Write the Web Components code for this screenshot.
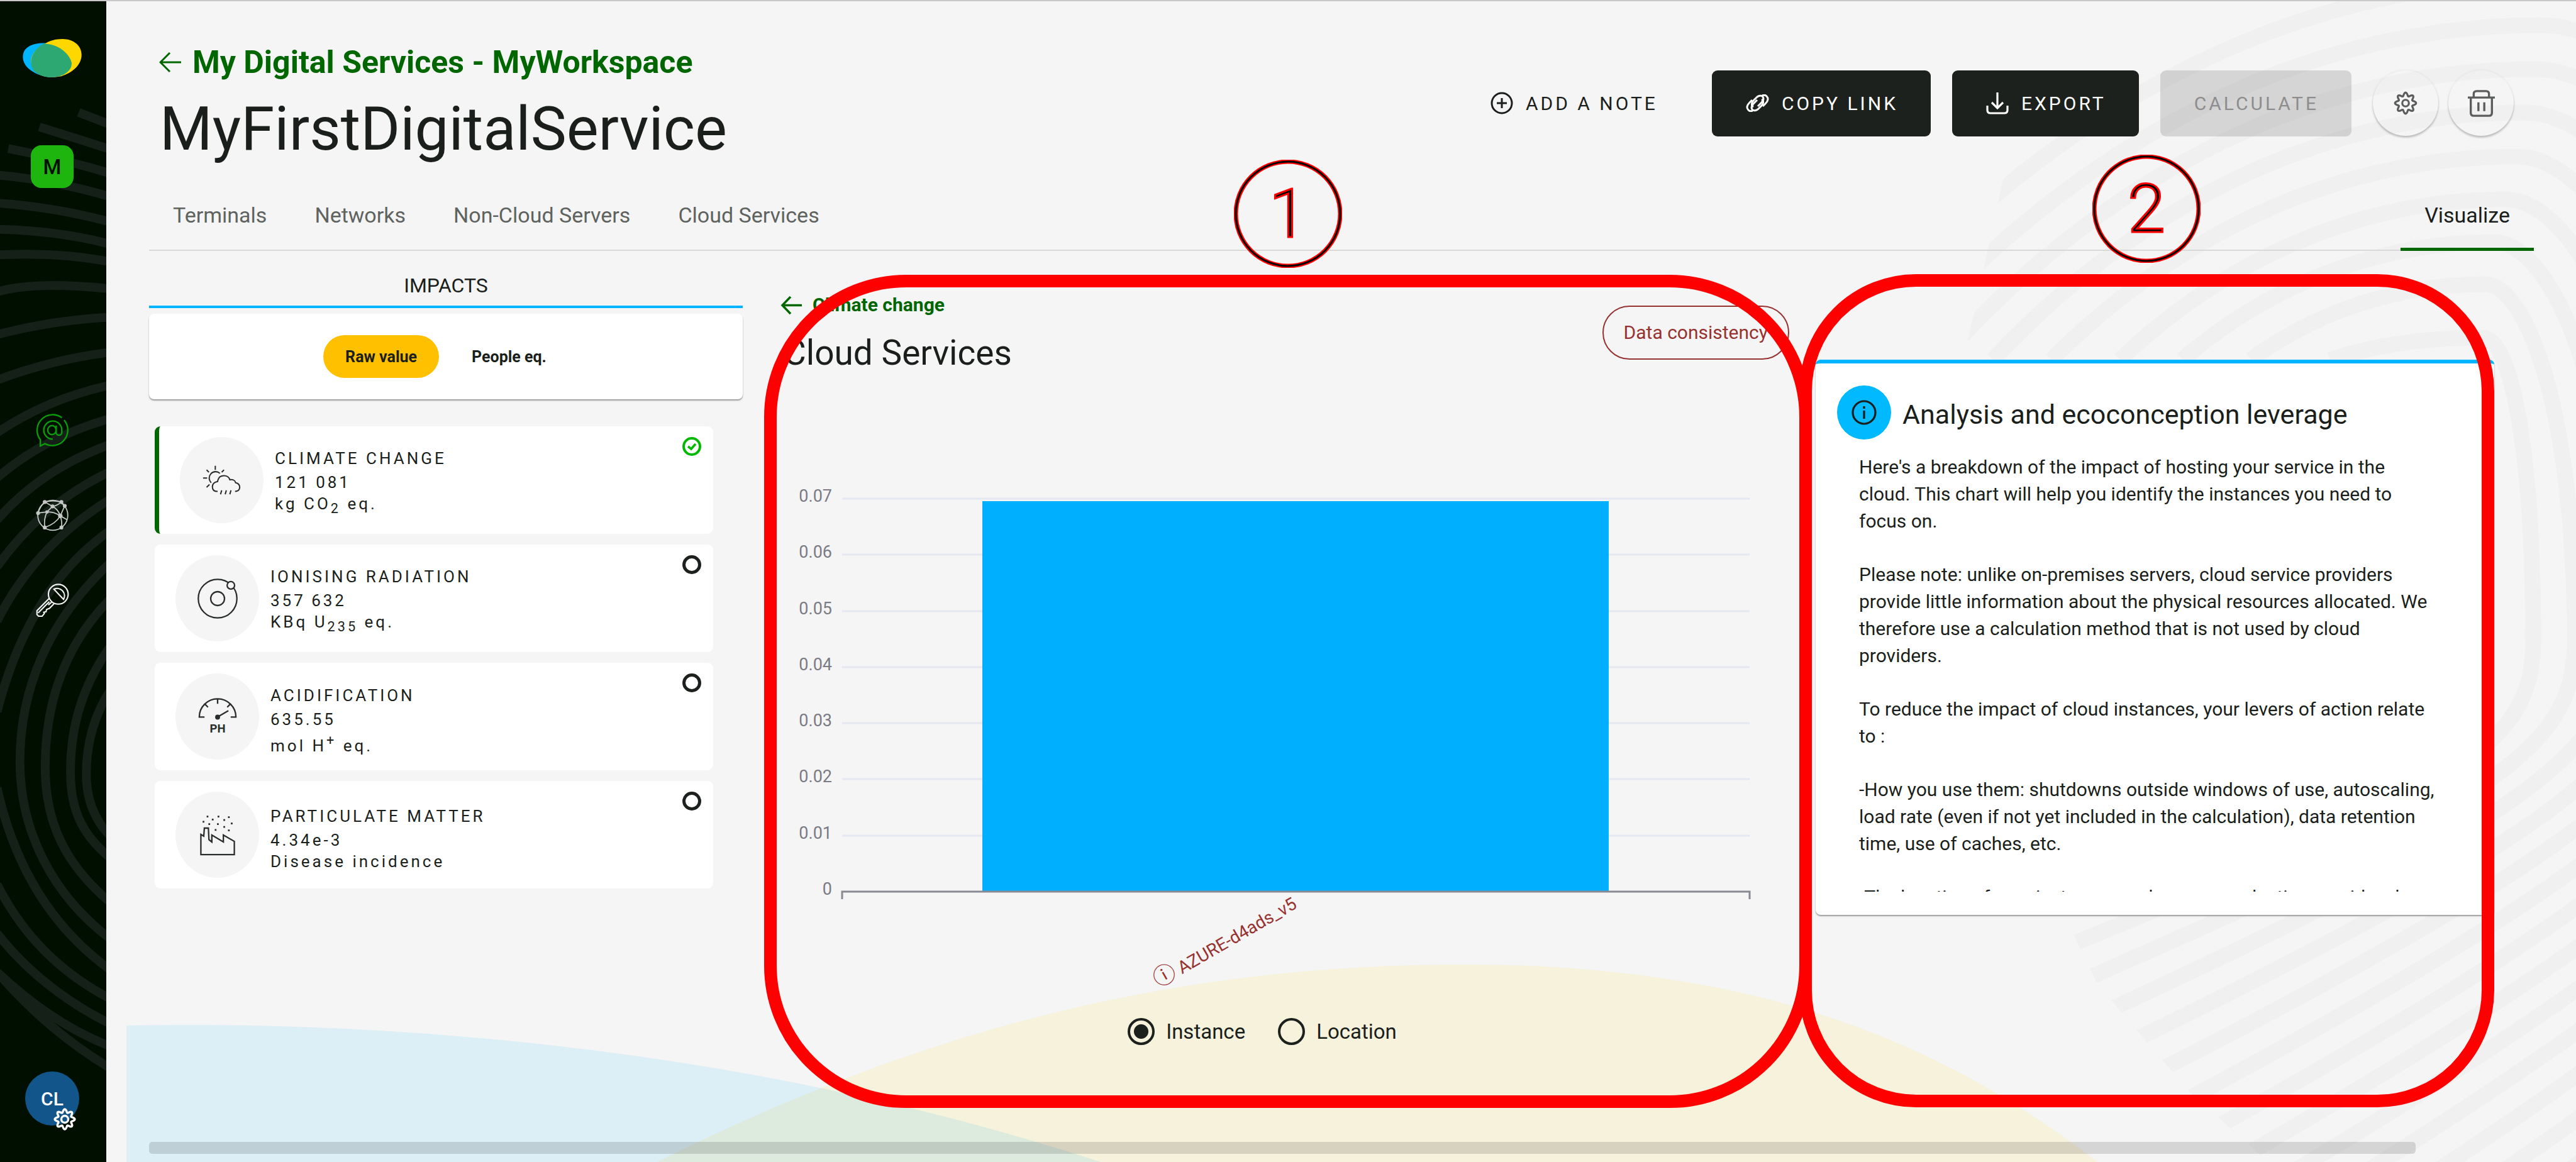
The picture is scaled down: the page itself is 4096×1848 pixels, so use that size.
<!DOCTYPE html>
<html lang="en">
<head>
<meta charset="utf-8">
<title>MyFirstDigitalService</title>
<style>
  html, body { margin: 0; background: #f5f5f5; }
  body { font-family: Roboto, "Liberation Sans", sans-serif; color: #1b1f1c; }
</style>
</head>
<body>
<app-shell>
  <side-bar slot="side"></side-bar>
  <page-header></page-header>
  <dashboard-grid>
    <impacts-panel slot="left"></impacts-panel>
    <chart-panel slot="middle"></chart-panel>
    <info-panel slot="right" heading="Analysis and ecoconception leverage">
      <p>Here's a breakdown of the impact of hosting your service in the cloud. This chart will help you identify the instances you need to focus on.</p>
      <p>Please note: unlike on-premises servers, cloud service providers provide little information about the physical resources allocated. We therefore use a calculation method that is not used by cloud providers.</p>
      <p>To reduce the impact of cloud instances, your levers of action relate to :</p>
      <p>-How you use them: shutdowns outside windows of use, autoscaling, load rate (even if not yet included in the calculation), data retention time, use of caches, etc.</p>
      <p>-The location of your instances and energy production provide a low</p>
    </info-panel>
  </dashboard-grid>
</app-shell>
<zone-frame style="left:1215px;top:437px;width:1666px;height:1325px;--r:226px"></zone-frame>
<zone-frame style="left:2861px;top:436px;width:1105px;height:1325px;--r:186px"></zone-frame>
<zone-number style="left:1962px;top:254px">1</zone-number>
<zone-number style="left:3327px;top:246px">2</zone-number>

<script>
const define = (name, html, extra) => customElements.define(name, class extends HTMLElement {
  constructor() {
    super();
    const t = document.createElement('template');
    t.innerHTML = '<style>*{box-sizing:border-box}svg{display:block;flex:none}a{color:inherit;text-decoration:none}button{font:inherit;color:inherit;border:0;background:none;padding:0;margin:0}</style>' + html;
    this.attachShadow({ mode: 'open' }).append(t.content.cloneNode(true));
  }
  connectedCallback() { if (extra) extra(this, this.shadowRoot); }
});

/* Eight-lobed cog outline around (18,18) */
const cog = (() => {
  let d = '';
  for (let i = 0; i < 128; i++) {
    const a = i / 128 * Math.PI * 2, r = 13.4 + 2.5 * Math.cos(8 * a);
    d += (i ? 'L' : 'M') + (18 + r * Math.sin(a)).toFixed(2) + ' ' + (18 - r * Math.cos(a)).toFixed(2);
  }
  return d + 'Z';
})();

define('app-shell', `
<style>
  :host { display: grid; grid-template-columns: 169px minmax(0, 1fr); min-height: 100vh; border-top: 2px solid #c9c9c9; box-sizing: border-box; position: relative; }
  main { position: relative; isolation: isolate; display: flex; flex-direction: column; padding: 65px 67px 13px 68px; }
  page-backdrop { position: absolute; inset: 0; z-index: -1; }
  .track { margin-top: auto; padding-right: 188px; }
  .thumb { height: 19px; border-radius: 5px; background: rgba(0,0,0,.13); }
</style>
<slot name="side"></slot>
<main>
  <page-backdrop></page-backdrop>
  <slot></slot>
  <div class="track"><div class="thumb"></div></div>
</main>`);

define('page-backdrop', `
<style>:host { display: block; overflow: hidden; } svg { width: 100%; height: 100%; }</style>
<svg viewBox="169 2 3927 1846" preserveAspectRatio="none" fill="none">
  <clipPath id="rings"><path d="M3262 0L3192 254L3125 560L3270 1430L3335 1565L3480 1735L3620 1860H4100V0Z"/></clipPath>
  <g clip-path="url(#rings)" stroke="#f0f0f0" stroke-width="25" id="g"></g>
  <path fill="#ffd700" fill-opacity=".1" d="M1045 1848C1500 1620 1900 1534 2331 1534C2780 1534 3080 1650 3335 1848Z"/>
  <path fill="#00b0ff" fill-opacity=".1" d="M201 1631A2700 1390 0 0 1 1750 1848H201Z"/>
</svg>`, (el, root) => {
  const left = [3705, 3579, 3470, 3371, 3262, 3169, 3085, 3000, 2915];
  const peak = [[3948, 537], [3952, 452], [3967, 385], [3985, 317], [4002, 249], [4015, 179], [4030, 110], [4040, 40], [4050, -30]];
  let d = '';
  peak.forEach(([px, py], i) => {
    const l = left[i], w = px - l, h = 572 - py, rx = 4028 + 66 * i;
    d += `M${l} 572C${l + w * .24} ${572 - h * .55} ${px - w * .42} ${py} ${px} ${py}`;
    d += `C${px + 45 + 14 * i} ${py} ${rx} ${py + 180} ${rx} 1020`;
    d += `C${rx} 1200 ${rx - 140} ${1260 + 20 * i} ${3200 + 36 * i} ${1540 + 52 * i}`;
  });
  for (let i = 9; i < 16; i++) {
    const rx = 4028 + 66 * i;
    d += `M${rx} 1020C${rx} 1200 ${rx - 140} ${1260 + 20 * i} ${3200 + 36 * i} ${1540 + 52 * i}`;
  }
  root.getElementById('g').innerHTML = `<path d="${d}"/>`;
});

define('side-bar', `
<style>
  :host { display: block; background: #000f00; color: #fff; position: relative; }
  .rings { position: absolute; inset: 0; width: 100%; height: 100%; }
  nav { position: relative; display: flex; flex-direction: column; align-items: center; height: 100%; padding: 60px 3px 58px 0; }
  .space { display: flex; align-items: center; justify-content: center; width: 68px; height: 68px; margin: 108px 0 359px; border-radius: 17px; background: #1fb50f; color: #000f00; font-size: 33px; font-weight: 500; }
  .links { display: flex; flex-direction: column; gap: 82px; }
  .user { position: relative; display: flex; align-items: center; justify-content: center; width: 86px; height: 86px; margin-top: auto; border-radius: 50%; background: #11558a; font-size: 30px; font-weight: 500; color: #fff; }
  .user svg { position: absolute; right: 5px; bottom: -8px; }
</style>
<svg class="rings" viewBox="0 0 181 1985" preserveAspectRatio="none" fill="none" stroke="#142018" stroke-width="15">
  <path d="M134 190L190 212M67 215Q125 233 190 254M14 252Q100 268 190 295M-5 297Q95 306 190 335M-5 345Q95 352 190 378M-5 390Q100 392 190 416M-5 434Q100 428 190 446M-5 497Q60 478 190 492M-5 570Q90 545 190 540"/>
  <path d="M-5 648Q90 612 190 600M-5 738Q80 680 190 656M-5 815Q75 745 190 713M-5 887Q70 800 190 757M-5 967Q70 860 190 803M-5 1060Q60 930 190 850M-5 1215Q50 1000 190 903"/>
  <path d="M190 958C80 1060 34 1180 34 1300C34 1420 90 1530 190 1605M190 1020C110 1100 77 1200 77 1310C77 1410 115 1480 190 1543M190 1100C140 1170 120 1240 120 1318C120 1390 145 1430 190 1467M190 1175C160 1220 147 1270 147 1322C147 1365 160 1400 190 1430"/>
  <path d="M-5 1345Q40 1550 190 1658M-5 1510Q60 1640 190 1707M-5 1594Q70 1690 190 1750M-5 1660Q90 1750 190 1788M-5 1660Q80 1760 190 1826"/>
</svg>
<nav>
  <a href="#" aria-label="Home"><svg width="95" height="61" viewBox="0 0 102 66">
    <path fill="#00b4ff" d="M0 31C0 14 16 7 36 7C60 8 76 26 80 42C80 56 66 66 48 66C24 64 0 50 0 31Z"/>
    <path fill="#ffd700" d="M38 8C46 3 56 0 68 0C88 0 101 12 101 27C101 44 86 58 66 64C56 66 48 66 36 64C24 60 14 50 14 38C14 24 26 14 38 8Z"/>
    <path fill="#2ea872" d="M36 8C62 8 82 27 84 42C84 57 66 66 50 66C40 66 30 63 20 56C16 52 14 46 14 40C14 26 24 14 36 8Z"/>
  </svg></a>
  <a class="space" href="#">M</a>
  <div class="links">
    <a href="#" aria-label="Digital services"><svg width="53" height="53" viewBox="0 0 59 59" fill="none" stroke="#0a9c0a" stroke-width="2.6">
      <path d="M46 7A27.500 27.500 0 0 0 8 46V57L16 53A27.500 27.500 0 0 0 50 11"/>
      <path d="M30 45A16 16 0 1 1 46 30V33A5 5 0 0 1 36 33V21M36 29A7.500 8 0 1 1 21 29A7.500 8 0 1 1 36 29"/></svg></a>
    <a href="#" aria-label="Inventories"><svg width="53" height="53" viewBox="0 0 60 58" fill="none" stroke="#c4c8c5" stroke-width="2">
      <circle cx="30.500" cy="29" r="27"/>
      <path d="M4 25Q8 12 16 5Q30 13 30 13Q38 12 46 5L52 12M16 5Q31 1 46 5M4 25L20 23L30 13Q40 18 44 30Q32 22 20 23Q14 36 16 51Q36 44 44 30L52 12M44 30L56 37M44 30Q48 42 46 51"/>
      <g fill="#c4c8c5"><circle cx="16" cy="5" r="2.500"/><circle cx="46" cy="5" r="2.500"/><circle cx="52" cy="12" r="2.500"/><circle cx="30" cy="13" r="2.500"/><circle cx="4" cy="25" r="2.500"/><circle cx="20" cy="23" r="2"/><circle cx="44" cy="30" r="3"/><circle cx="16" cy="51" r="2.500"/><circle cx="46" cy="51" r="2.500"/></g></svg></a>
    <a href="#" aria-label="Administration"><svg width="53" height="53" viewBox="0 0 59 59" fill="none" stroke="#f2f2f2" stroke-width="2.4">
      <circle cx="39.700" cy="19" r="17.500"/><path d="M32 10L49 28A13 13 0 0 0 32 10ZM24 26L2 48V55L5 58H11L15 53L14 51L18 50L19 46L24 44L32 36M24 32L4 52M28 33L22 38"/></svg></a>
  </div>
  <a class="user" href="#">CL<svg width="36" height="36" viewBox="0 0 36 36" fill="none" stroke="#fff" stroke-width="3.4"><path d="${cog}"/><circle cx="18" cy="18" r="5.500"/></svg></a>
</nav>`);

define('page-header', `
<style>
  :host { display: block; }
  .top { display: flex; align-items: center; justify-content: space-between; }
  .back { display: flex; align-items: center; gap: 17px; padding-left: 16px; line-height: 64px; font-size: 50px; font-weight: 700; color: #006600; }
  h1 { margin: 18px 0 0 17px; font-size: 96px; line-height: 112px; font-weight: 400; }
  .tools { display: flex; align-items: center; gap: 16px; padding-right: 32px; }
  .wide { display: flex; gap: 34px; margin-right: 18px; }
  .wide button { display: flex; align-items: center; gap: 20px; height: 105px; padding: 0 52px 0 54px; border-radius: 9px; font-size: 30px; letter-spacing: 4px; white-space: nowrap; }
  .dark { background: #1c211d; color: #fff; }
  .wide button:disabled { background: rgba(0,0,0,.13); color: #8d8d8d; }
  .round { display: flex; align-items: center; justify-content: center; width: 104px; height: 104px; border-radius: 50%; box-shadow: 0 3px 3px rgba(0,0,0,.2), 0 0 4px rgba(0,0,0,.08); }
  nav { display: flex; padding-top: 61px; border-bottom: 2px solid #d9d9d9; font-size: 34px; line-height: 40px; color: #5f6360; }
  nav a { padding: 0 38px 32px; border-bottom: 5px solid transparent; margin-bottom: -2px; }
  nav a[aria-current] { margin-left: auto; border-color: #006600; color: #1b1f1c; }
</style>
<div class="top">
  <div>
    <a class="back" href="#"><svg width="36" height="34" viewBox="0 0 36 34" fill="none" stroke="currentColor" stroke-width="3"><path d="M35 17H2M17 2L2 17L17 32"/></svg>My Digital Services - MyWorkspace</a>
    <h1>MyFirstDigitalService</h1>
  </div>
  <div class="tools">
    <div class="wide">
      <button><svg width="36" height="36" viewBox="0 0 36 36" fill="none" stroke="currentColor" stroke-width="3"><circle cx="18" cy="18" r="16"/><path d="M18 10V26M10 18H26"/></svg>ADD A NOTE</button>
      <button class="dark"><svg width="37" height="28" viewBox="0 0 37 28" fill="none" stroke="currentColor" stroke-width="3"><path d="M12 20C8 18 9 13 12 10L17 5C20 2 25 1 27 4C29 7 27 11 24 14L19 19"/><path d="M25 8C29 10 28 15 25 18L20 23C17 26 12 27 10 24C8 21 10 17 13 14L18 9"/><path d="M10 9L6 13C1 18 1 22 4 25C6 27 9 27 11 26M27 19L31 15C36 10 36 6 33 3C31 1 28 1 26 2"/></svg>COPY LINK</button>
      <button class="dark"><svg width="36" height="36" viewBox="0 0 36 36" fill="none" stroke="currentColor" stroke-width="3.2"><path d="M18 1V25M9 17L18 26L27 17M2 22V29Q2 34 7 34H29Q34 34 34 29V22"/></svg>EXPORT</button>
      <button disabled>CALCULATE</button>
    </div>
    <button class="round" aria-label="Settings"><svg width="38" height="38" viewBox="0 0 36 36" fill="none" stroke="#5a5d5b" stroke-width="3"><path d="${cog}"/><circle cx="18" cy="18" r="5"/></svg></button>
    <button class="round" aria-label="Delete"><svg width="43" height="43" viewBox="0 0 46 46" fill="none" stroke="#5a5d5b" stroke-width="3.600"><path d="M0 13H46M5 13V39Q5 44 10 44H36Q41 44 41 39V13M10 13V7Q10 2 15 2H31Q36 2 36 7V13M18 21V36M28 21V36"/></svg></button>
  </div>
</div>
<nav>
  <a href="#">Terminals</a><a href="#">Networks</a><a href="#">Non-Cloud Servers</a><a href="#">Cloud Services</a><a href="#" aria-current="page">Visualize</a>
</nav>`);

define('dashboard-grid', `
<style>
  :host { display: grid; grid-template-columns: 944fr 1706fr 1079fr; margin-right: 63px; }
  .mid { padding: 0 42px 0 60px; }
  .cell { min-width: 0; }
</style>
<div class="cell"><slot name="left"></slot></div>
<div class="cell mid"><slot name="middle"></slot></div>
<div class="cell"><slot name="right"></slot></div>`);

define('impacts-panel', `
<style>
  :host { display: block; }
  h2 { margin: 0 0 9px; padding: 35px 0 12px; border-bottom: 4px solid #00b4ff; font-size: 32px; line-height: 40px; font-weight: 400; text-align: center; }
  .units { display: flex; justify-content: center; gap: 17px; padding: 34px; border-radius: 8px; background: #fff; box-shadow: 0 2px 2px #9b9b9b; }
  .units button { height: 68px; padding: 0 35px; border-radius: 34px; font-size: 25px; font-weight: 700; }
  .units .on { background: #ffc000; }
  .list { display: flex; flex-direction: column; gap: 17px; margin: 43px 47px 0 9px; }
</style>
<h2>IMPACTS</h2>
<div class="units"><button class="on">Raw value</button><button>People eq.</button></div>
<div class="list">
  <impact-card label="CLIMATE CHANGE" value="121&#x2009;081" selected>kg CO<sub>2</sub> eq.
    <svg slot="icon" width="61" height="49" viewBox="0 0 66 53" fill="none" stroke="#2a2e2b" stroke-width="2.200"><path d="M15 31A10.500 10.500 0 1 1 30 15M22 2V9M7 9L11 13M1 23H8M7 39L12 34M33 13L37 9M26 46C20 46 17 43 17 38C17 33 21 30 26 29C27 22 31 19 37 19C42 19 46 22 47 26C52 25 56 27 57 31C62 32 64 35 64 39C64 43 61 46 56 46M33 44L31 51M41 44L39 51M49 44L47 51"/></svg>
  </impact-card>
  <impact-card label="IONISING RADIATION" value="357&#x2009;632">KBq U<sub>235</sub> eq.
    <svg slot="icon" width="66" height="66" viewBox="-36 -36 72 72" fill="#f5f5f5" stroke="#2a2e2b" stroke-width="2.500"><circle r="33.500"/><circle r="12"/><circle cx="23" cy="-23" r="6.500"/></svg>
  </impact-card>
  <impact-card label="ACIDIFICATION" value="635.55">mol H<sup>+</sup> eq.
    <svg slot="icon" width="62" height="62" viewBox="0 0 67 67" fill="none" stroke="#2a2e2b" stroke-width="2.500"><path d="M11 34H2A31.500 31.500 0 0 1 65 34H56M33.500 3V11M11 11L17 17M56 11L50 17M33 34L52 23"/><circle cx="33.500" cy="34" r="3" fill="#2a2e2b"/><text x="33.500" y="60" text-anchor="middle" fill="#2a2e2b" stroke="none" font-size="20" font-weight="700" font-family="Roboto, sans-serif" letter-spacing="0">PH</text></svg>
  </impact-card>
  <impact-card label="PARTICULATE MATTER" value="4.34e-3">Disease incidence
    <svg slot="icon" width="58" height="66" viewBox="0 0 62 72" fill="none" stroke="#2a2e2b" stroke-width="2.500"><path d="M2 70V35L7 38L8 24H15L16 44L21 48V36L41 48V36L60 47V70Z"/><path stroke-width="3" d="M12 4h3M31 4h3M49 5h3M21 9h3M41 10h3M5 13h3M54 16h3M15 17h3M30 17h3M41 22h3M26 27h3M49 28h3"/></svg>
  </impact-card>
</div>`);

define('impact-card', `
<style>
  :host { display: block; }
  label { display: flex; align-items: center; gap: 18px; height: 171px; padding: 0 19px 0 33px; border-radius: 9px; background: #fff; letter-spacing: 4px; font-size: 26px; line-height: 34px; }
  :host([selected]) label { border-left: 7px solid #006600; }
  .disc { flex: none; display: flex; align-items: center; justify-content: center; width: 133px; height: 137px; border-radius: 50%; background: #f5f5f5; }
  .text { flex: 1; padding-top: 12px; }
  .value { margin-top: 4px; }
  input { appearance: none; align-self: flex-start; width: 30px; height: 30px; margin: 17px 0 0; border: 5px solid #1c211d; border-radius: 50%; }
  input:checked { border: 4px solid #00b900; background: url("data:image/svg+xml,%3Csvg xmlns='http://www.w3.org/2000/svg' viewBox='0 0 22 22' fill='none' stroke='%2300b900' stroke-width='3.600'%3E%3Cpath d='M5 11L10 15L17 7'/%3E%3C/svg%3E") center / 22px no-repeat; }
</style>
<label>
  <span class="disc"><slot name="icon"></slot></span>
  <div class="text"><div class="title"></div><div class="value"></div><div><slot></slot></div></div>
  <input type="radio">
</label>`, (el, root) => {
  root.querySelector('.title').textContent = el.getAttribute('label');
  root.querySelector('.value').textContent = el.getAttribute('value');
  root.querySelector('input').checked = el.hasAttribute('selected');
});

define('chart-panel', `
<style>
  :host { display: block; padding-top: 67px; }
  .head { display: flex; align-items: center; justify-content: space-between; }
  .back { display: flex; align-items: center; gap: 17px; line-height: 38px; font-size: 30px; font-weight: 700; color: #006600; }
  h2 { margin: 25px 0 0 5px; font-size: 55px; line-height: 64px; font-weight: 400; }
  .flag { height: 86px; margin-bottom: 2px; padding: 0 32px; border: 2px solid #96322f; border-radius: 43px; color: #96322f; font-size: 30px; }
  svg.plot { width: 100%; height: auto; font-family: Roboto, "Noto Sans CJK JP", sans-serif; }
  fieldset { display: flex; justify-content: center; gap: 52px; margin: 10px 0 0; padding: 0 72px 0 0; border: 0; font-size: 33px; line-height: 43px; }
  label { display: flex; align-items: center; gap: 18px; }
  input { appearance: none; width: 43px; height: 43px; margin: 0; border: 4px solid #1c211d; border-radius: 50%; }
  input:checked { background: radial-gradient(#1c211d 11px, transparent 12px); }
</style>
<div class="head">
  <div>
    <a class="back" href="#"><svg width="34" height="31" viewBox="0 0 34 31" fill="none" stroke="currentColor" stroke-width="3.500"><path d="M34 15.500H3M16 2L3 15.500L16 29"/></svg>Climate change</a>
    <h2>Cloud Services</h2>
  </div>
  <button class="flag">Data consistency</button>
</div>
<svg class="plot" viewBox="0 0 1604 1016">
  <g id="grid" font-size="27" fill="#7b7b86"></g>
  <rect x="321" y="204" width="996" height="621" fill="#00b0ff"/>
  <path d="M98 837V825H1541V837" fill="none" stroke="#888993" stroke-width="3"/>
  <text transform="translate(823 850) rotate(-30)" text-anchor="end" font-size="28" fill="#96322f"><tspan font-size="36">ⓘ</tspan> AZURE-d4ads_v5</text>
</svg>
<fieldset>
  <label><input type="radio" name="by" checked>Instance</label>
  <label><input type="radio" name="by">Location</label>
</fieldset>`, (el, root) => {
  let h = '';
  for (let i = 0; i <= 7; i++) {
    const y = Math.round(825 - i * 89.3);
    if (i) h += `<path d="M98 ${y}H1541" stroke="#e5e8f1" stroke-width="3"/>`;
    h += `<text x="82" y="${y + 5}" text-anchor="end">${i ? (i / 100).toFixed(2) : 0}</text>`;
  }
  root.getElementById('grid').innerHTML = h;
});

define('info-panel', `
<style>
  :host { display: block; margin-top: 173px; height: 883px; box-sizing: border-box; border-top: 6px solid #00b4ff; border-radius: 8px; background: #fff; box-shadow: 0 2px 2px #9b9b9b; padding: 35px 34px 34px; }
  .head { display: flex; align-items: center; gap: 18px; }
  .badge { display: flex; align-items: center; justify-content: center; width: 86px; height: 86px; border-radius: 50%; background: #00b9ff; }
  h2 { margin: 6px 0 0; font-size: 43px; line-height: 50px; font-weight: 400; }
  .body { height: 697px; margin: 22px 56px 0 35px; overflow: hidden; font-size: 30px; line-height: 43px; }
  ::slotted(p) { margin: 0 0 42px; }
</style>
<div class="head">
  <span class="badge"><svg width="40" height="40" viewBox="0 0 40 40" fill="none" stroke="#1b1f1c" stroke-width="3.200"><circle cx="20" cy="20" r="18"/><path d="M20 17V30M20 10V14"/></svg></span>
  <h2></h2>
</div>
<div class="body"><slot></slot></div>`, (el, root) => {
  root.querySelector('h2').textContent = el.getAttribute('heading');
});

define('zone-frame', `
<style>:host { position: absolute; box-sizing: border-box; border: 20px solid #f00; border-radius: var(--r); pointer-events: none; }</style>`);

define('zone-number', `
<style>
  :host { position: absolute; display: flex; align-items: center; justify-content: center; width: 172px; height: 172px; font: 300 108px/172px Roboto, sans-serif; color: #000; -webkit-text-stroke: 3px #f00; }
  svg { position: absolute; inset: 0; }
  slot { position: relative; }
</style>
<svg width="172" height="172" fill="none"><circle cx="86" cy="86" r="83" stroke="#f00" stroke-width="7"/><circle cx="86" cy="86" r="83" stroke="#000" stroke-width="3"/></svg>
<slot></slot>`);
</script>
</body>
</html>
